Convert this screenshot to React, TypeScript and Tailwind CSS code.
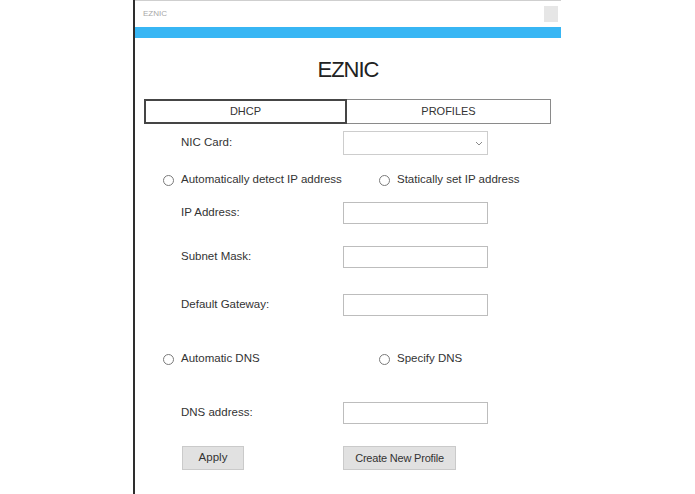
import React from "react";

const font = { fontFamily: '"Liberation Sans", Arial, sans-serif' };

function Radio({ label }: { label: string }) {
  return (
    <div className="flex items-center">
      <span className="w-[11px] h-[11px] shrink-0 rounded-full border border-[#7a7a7a] bg-white mr-[7px]" />
      <span className="text-[11.5px] text-[#333]">{label}</span>
    </div>
  );
}

function FieldRow({ label, top }: { label: string; top: string }) {
  return (
    <div className={`flex items-center h-[22px] ${top}`}>
      <div className="w-[208px] shrink-0 pl-[46px] text-[11.5px] text-[#333]">{label}</div>
      <div className="w-[145px] shrink-0 h-[22px] border border-[#bdbdbd] bg-white" />
    </div>
  );
}

export default function App() {
  return (
    <div className="w-full h-[494px] bg-white flex" style={font}>
      <div className="ml-[133px] w-[428px] h-full border-l-2 border-[#2e2e2e] flex flex-col">
        <div className="h-[27px] border-t border-[#cfcfcf] flex items-center justify-between pl-[8px] pr-[3px]">
          <span className="text-[8px] text-[#a8a8a8]">EZNIC</span>
          <span className="w-[14px] h-[16px] bg-[#e6e6e6]" />
        </div>
        <div className="h-[11px] bg-[#38b6f4]" />
        <div className="mt-[18px] h-[27px] flex items-center justify-center text-[22px] tracking-[-1px] text-[#222] leading-none">
          EZNIC
        </div>
        <div className="mt-[16px] ml-[9px] w-[407px] h-[25px] flex">
          <div className="w-[203px] h-full border-2 border-[#454545] flex items-center justify-center text-[11px] text-[#333]">
            DHCP
          </div>
          <div className="w-[204px] h-full border border-l-0 border-[#8a8a8a] flex items-center justify-center text-[11px] text-[#333]">
            PROFILES
          </div>
        </div>
        <div className="flex items-center h-[24px] mt-[7px]">
          <div className="w-[208px] shrink-0 pl-[46px] text-[11.5px] text-[#333]">NIC Card:</div>
          <div className="w-[145px] shrink-0 h-[24px] border border-[#cdcdcd] bg-white flex items-center justify-end pr-[4px]">
            <svg width="8" height="5" viewBox="0 0 8 5">
              <path d="M1 1 L4 4 L7 1" fill="none" stroke="#8a8a8a" strokeWidth="1" />
            </svg>
          </div>
        </div>
        <div className="flex items-center h-[20px] mt-[15px] pl-[28px]">
          <div className="w-[216px] shrink-0">
            <Radio label="Automatically detect IP address" />
          </div>
          <Radio label="Statically set IP address" />
        </div>
        <FieldRow label="IP Address:" top="mt-[12px]" />
        <FieldRow label="Subnet Mask:" top="mt-[22px]" />
        <FieldRow label="Default Gateway:" top="mt-[26px]" />
        <div className="flex items-center h-[20px] mt-[33px] pl-[28px]">
          <div className="w-[216px] shrink-0">
            <Radio label="Automatic DNS" />
          </div>
          <Radio label="Specify DNS" />
        </div>
        <FieldRow label="DNS address:" top="mt-[33px]" />
        <div className="flex items-center h-[24px] mt-[22px]">
          <div className="w-[208px] shrink-0 pl-[47px]">
            <div className="w-[62px] h-[24px] bg-[#e1e1e1] border border-[#cacaca] flex items-center justify-center text-[11.5px] text-[#333]">
              Apply
            </div>
          </div>
          <div className="w-[113px] shrink-0 h-[24px] bg-[#e1e1e1] border border-[#cacaca] flex items-center justify-center text-[11px] text-[#333] tracking-[-0.2px]">
            Create New Profile
          </div>
        </div>
      </div>
    </div>
  );
}
